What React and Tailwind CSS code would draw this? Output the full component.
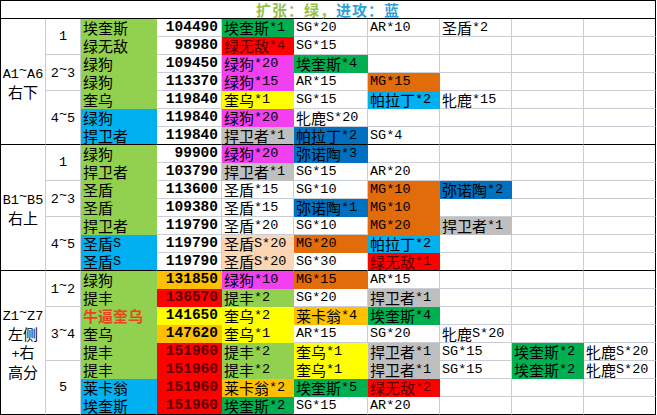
import React from 'react';

// fill + matching border colour per cell colour key
const FILL = {
  w: 'bg-white border-[#c9ced6]',
  g: 'bg-[#92d050] border-[#92d050]',
  b: 'bg-[#00b0f0] border-[#00b0f0]',
  lb: 'bg-[#00b0f0] border-[#00b0f0]',
  dg: 'bg-[#00b050] border-[#00b050]',
  db: 'bg-[#0070c0] border-[#0070c0]',
  r: 'bg-[#ff0000] border-[#ff0000] text-[#5c0000]',
  m: 'bg-[#f040f0] border-[#f040f0]',
  y: 'bg-[#ffff00] border-[#ffff00]',
  o: 'bg-[#e26b0a] border-[#e26b0a]',
  gr: 'bg-[#bfbfbf] border-[#bfbfbf]',
  p: 'bg-[#fcd5b4] border-[#fcd5b4]',
  gold: 'bg-[#ffc000] border-[#ffc000]',
};

const SPAN = { 2: 'row-span-2', 3: 'row-span-3', 7: 'row-span-7', 8: 'row-span-8' };

const CJK = /([\u2e80-\u9fff\u3000-\u303f\uff00-\uffef]+)/;

const groups = [
  {
    label: ['A1~A6', '右下'],
    subs: [['1', 2], ['2~3', 2], ['4~5', 3]],
    rows: [
      { n: '埃奎斯', nb: 'g', v: '104490', c: [['埃奎斯*1', 'dg'], 'SG*20', 'AR*10', '圣盾*2'] },
      { n: '绿无敌', nb: 'g', v: '98980', c: [['绿无敌*4', 'r'], 'SG*15'] },
      { n: '绿狗', nb: 'g', v: '109450', c: [['绿狗*20', 'm'], ['埃奎斯*4', 'dg']] },
      { n: '绿狗', nb: 'g', v: '113370', c: [['绿狗*15', 'm'], 'AR*15', ['MG*15', 'o']] },
      { n: '奎乌', nb: 'g', v: '119840', c: [['奎乌*1', 'y'], 'SG*15', ['帕拉丁*2', 'lb'], '牝鹿*15'] },
      { n: '绿狗', nb: 'b', v: '119840', c: [['绿狗*20', 'm'], '牝鹿S*20'] },
      { n: '捍卫者', nb: 'b', v: '119840', c: [['捍卫者*1', 'gr'], ['帕拉丁*2', 'db'], 'SG*4'] },
    ],
  },
  {
    label: ['B1~B5', '右上'],
    subs: [['1', 2], ['2~3', 2], ['4~5', 3]],
    rows: [
      { n: '绿狗', nb: 'g', v: '99900', c: [['绿狗*20', 'm'], ['弥诺陶*3', 'db']] },
      { n: '捍卫者', nb: 'g', v: '103790', c: [['捍卫者*1', 'gr'], 'SG*15', 'AR*20'] },
      { n: '圣盾', nb: 'g', v: '113600', c: ['圣盾*15', 'SG*10', ['MG*10', 'o'], ['弥诺陶*2', 'db']] },
      { n: '圣盾', nb: 'g', v: '109380', c: ['圣盾*15', ['弥诺陶*1', 'db'], ['MG*10', 'o']] },
      { n: '捍卫者', nb: 'g', v: '119790', c: ['圣盾*20', 'SG*10', ['MG*20', 'o'], ['捍卫者*1', 'gr']] },
      { n: '圣盾S', nb: 'b', v: '119790', c: [['圣盾S*20', 'p'], ['MG*20', 'o'], ['帕拉丁*2', 'lb']] },
      { n: '圣盾S', nb: 'b', v: '119790', c: [['圣盾S*20', 'p'], 'SG*30', ['绿无敌*1', 'r']] },
    ],
  },
  {
    label: ['Z1~Z7', '左侧', '+右', '高分'],
    subs: [['1~2', 2], ['3~4', 3], ['5', 3]],
    rows: [
      { n: '绿狗', nb: 'g', v: '131850', vb: 'gold', c: [['绿狗*10', 'm'], ['MG*15', 'o'], 'AR*15'] },
      { n: '提丰', nb: 'g', v: '136570', vb: 'r', c: [['提丰*2', 'g'], 'SG*20', ['捍卫者*1', 'gr']] },
      { n: '牛逼奎乌', nb: 'g', hot: true, v: '141650', vb: 'y', c: [['奎乌*2', 'y'], ['莱卡翁*4', 'gold'], ['埃奎斯*4', 'dg']] },
      { n: '奎乌', nb: 'g', v: '147620', vb: 'gold', c: [['奎乌*1', 'y'], 'AR*15', 'SG*20', '牝鹿S*20'] },
      { n: '提丰', nb: 'g', v: '151960', vb: 'r', c: [['提丰*2', 'g'], ['奎乌*1', 'y'], ['捍卫者*1', 'gr'], 'SG*15', ['埃奎斯*2', 'dg'], '牝鹿S*20'] },
      { n: '提丰', nb: 'g', v: '151960', vb: 'r', c: [['提丰*2', 'g'], ['奎乌*1', 'y'], ['捍卫者*1', 'gr'], 'SG*15', ['埃奎斯*2', 'dg'], '牝鹿S*20'] },
      { n: '莱卡翁', nb: 'b', v: '151960', vb: 'r', c: [['莱卡翁*2', 'gold'], ['埃奎斯*5', 'dg'], ['绿无敌*2', 'r']] },
      { n: '埃奎斯', nb: 'b', v: '151960', vb: 'r', c: [['埃奎斯*2', 'dg'], 'SG*15', 'AR*20'] },
    ],
  },
];

// SimSun-ish mix: CJK runs in Noto, latin runs in a narrow mono
const Txt = ({ s }) =>
  s.split(CJK).filter(Boolean).map((p, i) =>
    CJK.test(p) ? (
      <span key={i} className="font-['Noto_Sans_CJK_SC',sans-serif] text-[15px] leading-[17px]">{p}</span>
    ) : (
      <span key={i} className="font-['Liberation_Mono',monospace] text-[13.5px] leading-[17px]">
        {p.split(/(~)/).map((q, j) =>
          q === '~' ? <span key={j} className="align-[4px] leading-none">~</span> : q
        )}
      </span>
    )
  );

const Cell = ({ bg = 'w', last, lastCol, className = '', children }) => (
  <div
    className={`flex items-center whitespace-nowrap border-r border-b leading-[17px] ${FILL[bg]} ${
      last ? 'border-b-black' : ''
    } ${lastCol ? 'border-r-black' : ''} ${className}`}
  >
    {children}
  </div>
);

const Group = ({ label, subs, rows }) => {
  const items = [];
  items.push(
    <div
      key="label"
      className={`${SPAN[rows.length]} flex flex-col items-center justify-center border-r border-b border-r-[#c9ced6] border-b-black leading-[18px]`}
    >
      {label.map((l) => (
        <div key={l}>
          <Txt s={l} />
        </div>
      ))}
    </div>
  );

  let start = 0;
  const starts = {};
  subs.forEach(([t, n], i) => {
    starts[start] = { t, n, last: i === subs.length - 1 };
    start += n;
  });

  rows.forEach((r, ri) => {
    const last = ri === rows.length - 1;
    const sub = starts[ri];
    if (sub) {
      items.push(
        <div
          key={`s${ri}`}
          className={`${SPAN[sub.n]} flex items-center justify-center border-r border-b border-[#c9ced6] ${
            sub.last ? 'border-b-black' : ''
          }`}
        >
          <Txt s={sub.t} />
        </div>
      );
    }
    items.push(
      <Cell key={`n${ri}`} bg={r.nb} last={last} className="pl-[2px]">
        {r.hot ? (
          <span className="font-['Noto_Sans_CJK_SC',sans-serif] text-[15px] font-bold text-[#e8461e]">{r.n}</span>
        ) : (
          <Txt s={r.n} />
        )}
      </Cell>
    );
    items.push(
      <Cell
        key={`v${ri}`}
        bg={r.vb || 'w'}
        last={last}
        className="justify-end pr-[3px] font-['Liberation_Mono',monospace] text-[14.5px] font-bold"
      >
        {r.v}
      </Cell>
    );
    for (let k = 0; k < 6; k++) {
      const c = r.c[k];
      const text = Array.isArray(c) ? c[0] : c;
      const bg = Array.isArray(c) ? c[1] : 'w';
      items.push(
        <Cell key={`c${ri}-${k}`} bg={bg} last={last} lastCol={k === 5} className="pl-[2px]">
          {text ? <Txt s={text} /> : null}
        </Cell>
      );
    }
  });

  return (
    <div className="grid grid-cols-[45px_35px_76px_65px_72px_74px_72px_72px_72px_72px] auto-rows-[18px] text-black">
      {items}
    </div>
  );
};

export default function App() {
  return (
    <div className="w-[657px] h-[415px] overflow-hidden bg-white">
      <div className="w-fit border-l border-t border-black">
        <div className="flex h-[18px] items-center justify-center border-r border-b border-black font-['Noto_Sans_CJK_SC',sans-serif] text-[15px] font-bold leading-[17px] tracking-[1px]">
          <span className="text-[#92c24f]">扩张：绿，</span>
          <span className="text-[#2ea2d6]">进攻：蓝</span>
        </div>
        {groups.map((g) => (
          <Group key={g.label[0]} {...g} />
        ))}
      </div>
    </div>
  );
}
